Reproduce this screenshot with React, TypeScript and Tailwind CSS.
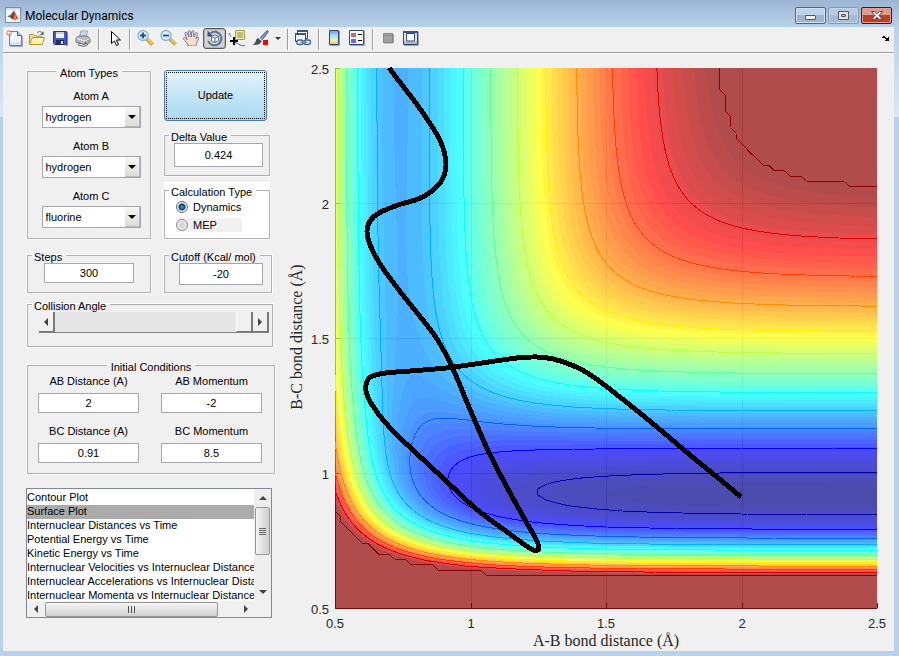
import { useMemo, useState } from 'react';
import type { ReactNode } from 'react';

// ---------- LEPS potential (kcal/mol, angstrom) ----------

type Pair = { d: number; beta: number; re: number };

const HH: Pair = { d: 109.5, beta: 1.942, re: 0.7419 };
const HF: Pair = { d: 141.2, beta: 2.2187, re: 0.917 };
const SATO = 0.424 * 0.424;

const R_MIN = 0.5;
const R_MAX = 2.5;
const PLOT_W = 542;
const PLOT_H = 540;
const V_MIN = -141.3;
const V_MAX = -20;
const V_CUT = -22.35;
const LEVEL_TOP = -22.1;
const LEVEL_STEP = 10.43;

const coulomb = (p: Pair, r: number) => {
  const e = Math.exp(-p.beta * (r - p.re));
  return (p.d / 4) * ((3 + SATO) * e * e - (2 + 6 * SATO) * e);
};

const exchange = (p: Pair, r: number) => {
  const e = Math.exp(-p.beta * (r - p.re));
  return (p.d / 4) * ((1 + 3 * SATO) * e * e - (6 + 2 * SATO) * e);
};

const potential = (ab: number, bc: number) => {
  const ac = ab + bc;
  const q = coulomb(HH, ab) + coulomb(HF, bc) + coulomb(HF, ac);
  const j1 = exchange(HH, ab);
  const j2 = exchange(HF, bc);
  const j3 = exchange(HF, ac);
  const root = Math.sqrt(0.5 * ((j1 - j2) ** 2 + (j2 - j3) ** 2 + (j3 - j1) ** 2));
  return Math.min((q - root) / (1 + SATO), V_CUT);
};

const clamp01 = (v: number) => Math.max(0, Math.min(1, v));

// 64 step jet colour map
const jet = (index: number) => {
  const x = (index + 1) / 64;
  const ch = (center: number) => Math.round(255 * clamp01(1.5 - Math.abs(4 * x - center)));
  return `rgb(${ch(3)},${ch(2)},${ch(1)})`;
};

const colorIndex = (v: number) =>
  Math.max(0, Math.min(63, Math.floor(((v - V_MIN) / (V_MAX - V_MIN)) * 64)));

// one path per colour, built from horizontal runs
const buildSurface = () => {
  const paths: string[] = Array(64).fill('');
  for (let y = 0; y < PLOT_H + 1; y++) {
    const bc = R_MAX - ((y + 0.5) / PLOT_H) * (R_MAX - R_MIN);
    let start = 0;
    let current = -1;
    for (let x = 0; x <= PLOT_W; x++) {
      const ab = R_MIN + ((x + 0.5) / PLOT_W) * (R_MAX - R_MIN);
      const idx = x === PLOT_W ? -2 : colorIndex(potential(ab, bc));
      if (idx !== current) {
        if (current >= 0) paths[current] += `M${start} ${y}h${x - start}v1h${start - x}z`;
        start = x;
        current = idx;
      }
    }
  }
  return paths;
};

// marching squares over a 0.02 angstrom grid
const GRID = 100;

const buildContours = () => {
  const v: number[][] = [];
  for (let i = 0; i <= GRID; i++) {
    v.push([]);
    for (let j = 0; j <= GRID; j++) {
      v[i].push(potential(R_MIN + i * 0.02, R_MIN + j * 0.02));
    }
  }
  const point = (i: number, j: number) => [(i / GRID) * PLOT_W, PLOT_H - (j / GRID) * PLOT_H];

  return Array.from({ length: 12 }, (_, k) => {
    const level = k === 0 ? V_CUT - 0.001 : LEVEL_TOP - k * LEVEL_STEP;
    let d = '';
    for (let i = 0; i < GRID; i++) {
      for (let j = 0; j < GRID; j++) {
        const corners = [[i, j], [i + 1, j], [i + 1, j + 1], [i, j + 1]];
        const hits: string[] = [];
        for (let c = 0; c < 4; c++) {
          const [ai, aj] = corners[c];
          const [bi, bj] = corners[(c + 1) % 4];
          const va = v[ai][aj];
          const vb = v[bi][bj];
          if (va < level !== vb < level) {
            const t = (level - va) / (vb - va);
            const [ax, ay] = point(ai, aj);
            const [bx, by] = point(bi, bj);
            hits.push(`${(ax + (bx - ax) * t).toFixed(1)} ${(ay + (by - ay) * t).toFixed(1)}`);
          }
        }
        for (let h = 0; h + 1 < hits.length; h += 2) d += `M${hits[h]}L${hits[h + 1]}`;
      }
    }
    return { d, color: jet(colorIndex(level)) };
  });
};

const TRAJECTORY = [
  [54, 0], [83, 38], [101, 65], [108, 80], [111, 97], [107, 112], [97, 123], [83, 131],
  [63, 137], [44, 145], [35, 153], [32, 164], [36, 179], [47, 199], [67, 226], [87, 251],
  [102.7, 272], [117.7, 300.3], [131, 332], [141.7, 357], [154.3, 385.3], [171.7, 418.7],
  [188.3, 448.7], [200, 469.3], [204, 479.5], [201, 482.5], [193.3, 479.3], [171.7, 463.7],
  [141.7, 441.3], [108.3, 410.3], [75, 379.3], [58.3, 363.3], [41.7, 343.7], [33, 329.3],
  [30.7, 318.7], [35, 309.3], [48.3, 305.3], [75, 303], [108.3, 300.3], [128.3, 297.7],
  [158.3, 293.3], [181.7, 290], [201.7, 289], [218.3, 291], [238.3, 297.7], [258.3, 308.7],
  [295, 337], [322, 359], [355, 387], [382, 409], [406, 429],
];

const smoothPath = (pts: number[][]) => {
  let d = `M${pts[0][0]} ${pts[0][1]}`;
  for (let i = 0; i < pts.length - 1; i++) {
    const p0 = pts[Math.max(i - 1, 0)];
    const p1 = pts[i];
    const p2 = pts[i + 1];
    const p3 = pts[Math.min(i + 2, pts.length - 1)];
    d += `C${p1[0] + (p2[0] - p0[0]) / 6} ${p1[1] + (p2[1] - p0[1]) / 6} ${p2[0] - (p3[0] - p1[0]) / 6} ${p2[1] - (p3[1] - p1[1]) / 6} ${p2[0]} ${p2[1]}`;
  }
  return d;
};

const TICKS = [0.5, 1, 1.5, 2, 2.5];

const SurfacePlot = () => {
  const surface = useMemo(buildSurface, []);
  const contours = useMemo(buildContours, []);
  const px = (r: number) => Math.round(((r - R_MIN) / 2) * PLOT_W);
  const py = (r: number) => Math.round(PLOT_H - ((r - R_MIN) / 2) * PLOT_H);

  return (
    <svg viewBox="0 0 609 597" className="block h-auto w-full" role="img" aria-label="Surface plot">
      <g transform="translate(50 14)">
        <rect width={PLOT_W} height={PLOT_H + 1} fill="#fff" />
        <g stroke="#262626" strokeWidth="1" shapeRendering="crispEdges">
          {TICKS.slice(1, 4).map(t => (
            <g key={t} strokeOpacity="0.2">
              <line x1={px(t) + 0.5} x2={px(t) + 0.5} y1="0" y2={PLOT_H} />
              <line y1={py(t) + 0.5} y2={py(t) + 0.5} x1="0" x2={PLOT_W} />
            </g>
          ))}
          {TICKS.map(t => (
            <g key={t}>
              <line x1={px(t) + 0.5} x2={px(t) + 0.5} y1={PLOT_H - 5} y2={PLOT_H} />
              <line y1={py(t) + 0.5} y2={py(t) + 0.5} x1="0" x2="5" />
            </g>
          ))}
          <line x1="0.5" x2="0.5" y1="0" y2={PLOT_H} />
          <line x1="0" x2={PLOT_W} y1={PLOT_H + 0.5} y2={PLOT_H + 0.5} />
        </g>
        <g fillOpacity="0.7" shapeRendering="crispEdges">
          {surface.map((d, i) => d && <path key={i} d={d} fill={jet(i)} />)}
        </g>
        <g fill="none" shapeRendering="crispEdges">
          {contours.map((c, i) => <path key={i} d={c.d} stroke={c.color} strokeWidth="1" />)}
        </g>
        <path
          d={smoothPath(TRAJECTORY)}
          fill="none"
          stroke="#000"
          strokeWidth="5"
          strokeLinejoin="round"
          shapeRendering="crispEdges"
        />
      </g>
      <g fill="#262626" className="font-['Liberation_Sans'] text-[13px]">
        {TICKS.map(t => (
          <g key={t}>
            <text x={50 + px(t)} y="574" textAnchor="middle">{t}</text>
            <text x="44" y={py(t) + 20} textAnchor="end">{t}</text>
          </g>
        ))}
      </g>
      <g fill="#262626" className="font-['Liberation_Serif'] text-[16px]">
        <text x="321" y="592" textAnchor="middle">A-B bond distance (Å)</text>
        <text transform="translate(17 283) rotate(-90)" textAnchor="middle">B-C bond distance (Å)</text>
      </g>
    </svg>
  );
};

// ---------- toolbar ----------

const Icon = ({ children }: { children: ReactNode }) => (
  <svg viewBox="0 0 19 19" className="h-[19px] w-[19px] shrink-0" fill="none" aria-hidden="true">{children}</svg>
);

const NewIcon = () => (
  <Icon>
    <path d="M4.500 2.500h8l4 4v10h-12z" fill="#eef5fd" stroke="#5d83b5" />
    <path d="M5 13h11v3H5z" fill="#d3e3f6" />
    <path d="M12.500 2.500v4h4" fill="#b9d2ef" stroke="#3b62a0" />
    <path d="M17.500 7v10.500H5" stroke="#9aa5b5" />
    <path d="M4 1v6M1 4h6M2 2l4 4M6 2 2 6" stroke="#e2703a" />
    <circle cx="4" cy="4" r="1.300" fill="#fff3d0" />
  </Icon>
);

const OpenIcon = () => (
  <Icon>
    <path d="M1.500 15.500V5.500h4l1.500 1.500h6.500V9" fill="#f5dd82" stroke="#b8942f" />
    <path d="m1.500 15.500 3-7h12l-2.500 7z" fill="#fdf0a8" stroke="#b8942f" />
    <path d="M5 10h10M4.500 12h10" stroke="#fffad6" />
    <path d="M9 4c1.500-2 4-2 5.500.5" stroke="#5b7186" />
    <path d="M15.800 2v4h-4z" fill="#5b7186" />
  </Icon>
);

const SaveIcon = () => (
  <Icon>
    <path d="M4 3.500h12.500v13H15" stroke="#8d8fa6" />
    <path d="M2.500 2.500h13v13h-12l-1-1z" fill="#4a59c4" stroke="#2c3691" />
    <path d="M5 3h8v6H5z" fill="#edf1fb" />
    <path d="M5 3h8v2H5z" fill="#c3cdee" />
    <path d="M5 11h8v5H5z" fill="#232c5c" />
    <path d="M10 12h2v3h-2z" fill="#dfe4f5" />
  </Icon>
);

const PrintIcon = () => (
  <Icon>
    <path d="m5.500 8 1.500-6h6.500L12 8z" fill="#e9f1fc" stroke="#8d9cb5" />
    <path d="M7.500 4h4.500M7 6h4.500" stroke="#a5b9d6" />
    <path d="m2 9 3-2h8l3 2.500v4L11 16l-9-3z" fill="#b9babd" stroke="#707275" />
    <path d="m2.500 9.500 9 2.500 4-2.500" stroke="#f2f2f2" />
    <path d="m5 14 5 1.500 2-1.500 2 1.500L10 17.500 4 16z" fill="#eee" stroke="#66686b" />
    <path d="M11.500 12.500v3" stroke="#5c5e61" />
    <path d="M13 11.500h2" stroke="#6dbb3d" />
  </Icon>
);

const PointerIcon = () => (
  <Icon>
    <path d="M6.500 2.500v12l3-2.500 2 4.500 2-1-2-4.500h4z" fill="#fff" stroke="#000" />
  </Icon>
);

const ZoomIcon = ({ plus }: { plus?: boolean }) => (
  <Icon>
    <path d="m11 10 5.500 5.500" stroke="#c58a2a" strokeWidth="3.600" />
    <path d="m11.500 10 5 5" stroke="#fbc263" strokeWidth="1.800" />
    <circle cx="7" cy="6.500" r="5" fill="#d8f0fb" stroke="#8db5d6" strokeWidth="1.400" />
    <path d={plus ? 'M4 6.500h6M7 3.500v6' : 'M4 6.500h6'} stroke="#1e4f8c" strokeWidth="1.800" />
  </Icon>
);

const HandIcon = () => (
  <Icon>
    <path
      d="M6 16.500c0-2-3-4.500-4.500-6.500-.6-1.300.9-2 2-.8l1.500 1.500L3 4.500c-.3-1.400 1.300-1.800 1.900-.6L7 8 6.200 2.700c0-1.400 1.700-1.500 2.100-.2L9.300 8l.6-5.600c.3-1.200 1.900-1 2 .3L11.800 8l1.900-3.900c.7-1 2-.5 1.800.7l-1.300 5 .7-1c.9-1.100 2.300-.5 1.800.8-1 2-2.200 4-2.700 6.900z"
      fill="#fbdfc5"
      stroke="#6b78a3"
    />
    <path d="M7 16.500h6.500" stroke="#d9a883" />
  </Icon>
);

const RotateIcon = () => (
  <Icon>
    <path d="M5.500 4a6.800 6.800 0 1 1-2.300 8" stroke="#566f98" strokeWidth="2" />
    <path d="M2.500 1.500v6h6z" fill="#3d5783" />
    <path d="m6.500 7.500 3.500-1.500 3.500 1.500v4l-3.500 2-3.500-1.500z" fill="#f5f8fd" stroke="#5a76a3" />
    <path d="m6.500 7.500 3.500 1.500 3.500-1.500M10 9v4.500" stroke="#5a76a3" />
  </Icon>
);

const DataCursorIcon = () => (
  <Icon>
    <path d="M1 4c1 1.500 1.500 2.500 2 4M7 13.500c2 .5 3 1 5 2.500 1.500 1 3 .8 4.500.5" stroke="#3c36e0" strokeDasharray="3 1" />
    <path d="M7.500 1.500h9v9h-9z" fill="#f3efa4" stroke="#a59c45" />
    <path d="M9 4h6M9 6h6M9 8h6" stroke="#8c8650" />
    <path d="M6 8v8M2 12h8" stroke="#000" strokeWidth="2" />
  </Icon>
);

const BrushIcon = () => (
  <Icon>
    <path d="m9 9 7-7.500 1.500 1L11 11z" fill="#7f9bdc" stroke="#3d539b" />
    <path d="M8 9c-2 0-3 1.500-3.200 3S3 15 1.500 15.500c3 1 8 .5 9.500-4z" fill="#4c4d52" />
    <path d="m8 9 3 2.500" stroke="#e6e6e6" strokeWidth="1.500" />
    <path d="M12 11h5v5h-5z" fill="#f00" />
  </Icon>
);

const LinkIcon = () => (
  <Icon>
    <path d="M3.500 1.500h10v8h-10z" fill="#fff" stroke="#2c457c" />
    <path d="M3 1h11v2H3z" fill="#2f539c" />
    <path d="M1.500 4.500h10v8h-10z" fill="#f3f7fd" stroke="#2c457c" />
    <path d="M1 4h11v2H1z" fill="#2f539c" />
    <rect x="2.800" y="11" width="6.500" height="4.500" rx="2.200" fill="#dcebf6" stroke="#45688c" strokeWidth="1.300" />
    <rect x="10" y="11" width="6.500" height="4.500" rx="2.200" fill="#dcebf6" stroke="#45688c" strokeWidth="1.300" />
    <path d="M6.500 13.200H13" stroke="#6f90af" strokeWidth="1.600" />
  </Icon>
);

const ColorbarIcon = () => (
  <Icon>
    <defs>
      <linearGradient id="bar" x1="0" y1="0" x2="0" y2="1">
        <stop offset="0" stopColor="#8f86ec" />
        <stop offset="0.35" stopColor="#93e6f5" />
        <stop offset="0.7" stopColor="#f4f0a0" />
        <stop offset="1" stopColor="#f5b09a" />
      </linearGradient>
    </defs>
    <path d="M5 16.500h9.500V2" stroke="#9a9ca3" />
    <path d="M4.500 1.500h9v14h-9z" fill="url(#bar)" stroke="#2c457c" />
  </Icon>
);

const LegendIcon = () => (
  <Icon>
    <path d="M2 16.500h14.500V2" stroke="#a4a6ad" />
    <path d="M1.500 1.500h14v14h-14z" fill="#f6f9fe" stroke="#2c457c" />
    <path d="M3 4h5v4H3z" fill="#e26264" />
    <path d="M3 10h5v4H3z" fill="#6b6be8" />
    <path d="M10 5.500h4M10 11.500h4" stroke="#000" />
  </Icon>
);

const HideIcon = () => (
  <Icon>
    <path d="M5 14h9.500V5" stroke="#a0a0a0" />
    <path d="M4.500 4.500h9v9h-9z" fill="#a3a3a3" stroke="#848484" />
    <path d="M5 6.500h8" stroke="#8c8c8c" />
  </Icon>
);

const DockIcon = () => (
  <Icon>
    <path d="M2 16.500h14.500V3" stroke="#a4a6ad" />
    <path d="M1.500 2.500h14v13h-14z" fill="#dfe3ec" stroke="#2c457c" />
    <path d="M1 2h15v2H1z" fill="#2f539c" />
    <path d="M2 12.500h13v2.500H2z" fill="#b7b9a8" />
    <path d="M4.500 4.500h8v7.500h-8z" fill="#fff" stroke="#2c457c" />
  </Icon>
);

const ToolButton = ({ label, active, children }: { label: string; active?: boolean; children: ReactNode }) => (
  <button
    type="button"
    aria-label={label}
    title={label}
    className={`flex h-[21px] w-[23px] items-center justify-center ${
      active ? 'rounded-[3px] border border-[#5a5a5a] bg-[#d3d3d3] shadow-[inset_0_0_0_1px_#b5b5b5]' : ''
    }`}
  >
    {children}
  </button>
);

const Separator = () => <div className="mx-[3px] mt-px h-[21px] w-[2px] border-l border-[#9c9c9c] bg-white" />;

const Toolbar = () => (
  <div className="flex h-[27px] items-start border-b border-white bg-[#f0f0f0] pt-px shadow-[inset_0_-1px_0_#a0a0a0]">
    <ToolButton label="New Figure"><NewIcon /></ToolButton>
    <ToolButton label="Open File"><OpenIcon /></ToolButton>
    <ToolButton label="Save Figure"><SaveIcon /></ToolButton>
    <ToolButton label="Print Figure"><PrintIcon /></ToolButton>
    <Separator />
    <ToolButton label="Edit Plot"><PointerIcon /></ToolButton>
    <Separator />
    <ToolButton label="Zoom In"><ZoomIcon plus /></ToolButton>
    <ToolButton label="Zoom Out"><ZoomIcon /></ToolButton>
    <ToolButton label="Pan"><HandIcon /></ToolButton>
    <ToolButton label="Rotate 3D" active><RotateIcon /></ToolButton>
    <ToolButton label="Data Cursor"><DataCursorIcon /></ToolButton>
    <ToolButton label="Brush"><BrushIcon /></ToolButton>
    <button type="button" aria-label="Brush colours" className="flex h-[21px] w-3 items-center justify-center">
      <svg viewBox="0 0 6 4" className="h-1 w-1.5" aria-hidden="true"><path d="M0 0h6L3 3z" fill="#333" /></svg>
    </button>
    <Separator />
    <ToolButton label="Link Plot"><LinkIcon /></ToolButton>
    <Separator />
    <ToolButton label="Insert Colorbar"><ColorbarIcon /></ToolButton>
    <ToolButton label="Insert Legend"><LegendIcon /></ToolButton>
    <Separator />
    <ToolButton label="Hide Plot Tools"><HideIcon /></ToolButton>
    <ToolButton label="Show Plot Tools"><DockIcon /></ToolButton>
    <button type="button" aria-label="Dock Figure" className="mr-1 ml-auto flex h-[22px] w-2 items-center">
      <svg viewBox="0 0 8 6" className="h-1.5 w-2" shapeRendering="crispEdges" aria-hidden="true">
        <path d="M0 1h1V0h2v1h1v1h2V1h1v4H3V4h1V3H3V2H0z" fill="#000" />
      </svg>
    </button>
  </div>
);

// ---------- title bar ----------

const TitleBar = () => (
  <header className="flex h-[27px] items-start bg-linear-to-b from-[#9bb5d2] to-[#b8d1eb]">
    <svg viewBox="0 0 16 16" className="mt-[7px] ml-[5px] h-4 w-4" aria-hidden="true">
      <path d="M.5.500h15v15H.5z" fill="#f6f7f9" stroke="#7b8ea5" />
      <path d="M1 1h14v2H1z" fill="#cfdcea" />
      <path d="m2 9.500 3.500-1.700L9 3.500 7 12l-1.500-1.500z" fill="#3d6fae" />
      <path d="M9 3.500c1.500 2 2.500 6 5 8.500-2-.8-3 0-4 1.500-1-.5-2-1.500-3.200-1.500C8 10 8.300 6 9 3.500z" fill="#d8552a" />
      <path d="M9 3.500c.4 3 .3 6-2.200 8.500L5.500 10.500C7 9 8 6.500 9 3.500z" fill="#7d2d23" />
      <path d="M9.300 5c.6 2.500.7 4.500.2 7.500l1.500-1z" fill="#f7a845" />
    </svg>
    <h1 className="mt-2 ml-1 font-['Roboto'] text-[12px] leading-4 text-black">Molecular Dynamics</h1>
    <div className="mt-[7px] mr-[7px] ml-auto flex gap-[2px]">
      <button type="button" aria-label="Minimize" className="flex h-[17px] w-[31px] items-center justify-center rounded-[2px] border border-[#56657c] bg-linear-to-b from-[#bfd2e7] from-50% to-[#9cb6d2] to-50% shadow-[inset_0_0_0_1px_#d3e1f0]">
        <span className="mt-1 h-[5px] w-[11px] rounded-[1px] border border-[#55585f] bg-[#f4f4ee]" />
      </button>
      <button type="button" aria-label="Maximize" className="flex h-[17px] w-[31px] items-center justify-center rounded-[2px] border border-[#8197b3] bg-linear-to-b from-[#b7cce3] from-50% to-[#a3bcd8] to-50% shadow-[inset_0_0_0_1px_#c1d3e7]">
        <svg viewBox="0 0 11 9" className="h-[9px] w-[11px]" aria-hidden="true">
          <path d="M.5.500h10v8H.5z" fill="#e4e4e0" stroke="#55585f" />
          <path d="M3.500 3.500h4v2h-4z" fill="#a3bcd8" stroke="#55585f" />
        </svg>
      </button>
      <button type="button" aria-label="Close" className="flex h-[17px] w-[31px] items-center justify-center rounded-[2px] border border-[#4a1220] bg-linear-to-b from-[#e09a8c] from-50% to-[#bb4026] to-50% shadow-[inset_0_0_0_1px_#e3a497]">
        <svg viewBox="0 0 12 9" className="h-[9px] w-3" aria-hidden="true">
          <path d="M.5.500h3.200L6 2.700 8.300.500h3.200L8 4.500l3.500 4H8.300L6 6.300 3.700 8.500H.5L4 4.500z" fill="#f4f4f4" stroke="#55475a" />
        </svg>
      </button>
    </div>
  </header>
);

// ---------- controls ----------

const Group = ({ title, id, className, center, children }: {
  title: string;
  id: string;
  className: string;
  center?: boolean;
  children: ReactNode;
}) => (
  <fieldset aria-labelledby={id} className={`border border-[#b0b0b0] shadow-[0_0_0_1px_#fbfbfb] ${className}`}>
    <legend id={id} className={`pt-1 leading-3 ${center ? 'mx-auto px-1' : 'ml-1 pr-1 pl-[2px]'}`}>{title}</legend>
    {children}
  </fieldset>
);

const INPUT = 'block border border-[#a5a7ad] bg-white text-center leading-4 outline-none';

const AtomSelect = ({ label, id, initial }: { label: string; id: string; initial: string }) => (
  <div className="flex flex-col items-center gap-[2px]">
    <label htmlFor={id} className="leading-4">{label}</label>
    <div className="relative w-[99px]">
      <select
        id={id}
        defaultValue={initial}
        className="block h-[22px] w-full appearance-none rounded-none border border-[#a5a7ad] bg-white pl-[3px] outline-none"
      >
        <option>hydrogen</option>
        <option>fluorine</option>
        <option>chlorine</option>
      </select>
      <span className="pointer-events-none absolute top-px right-px flex h-5 w-[15px] items-center justify-center border-r border-b border-[#b9b9b9] bg-linear-to-b from-[#f6f6f6] to-[#dcdcdc]">
        <svg viewBox="0 0 8 4" className="h-1 w-2" aria-hidden="true"><path d="M0 0h8L4 4z" fill="#000" /></svg>
      </span>
    </div>
  </div>
);

const Field = ({ label, id, initial }: { label: string; id: string; initial: string }) => (
  <div className="flex flex-col items-center gap-1">
    <label htmlFor={id} className="leading-4">{label}</label>
    <input id={id} defaultValue={initial} className={`${INPUT} h-5 w-full`} />
  </div>
);

const Arrow = ({ d }: { d: string }) => (
  <svg viewBox="0 0 8 8" className="h-2 w-2" aria-hidden="true"><path d={d} fill="#444" /></svg>
);

const UP = 'M0 6h8L4 2z';
const DOWN = 'M0 2h8L4 6z';
const LEFT = 'M6 0v8L2 4z';
const RIGHT = 'M2 0v8l4-4z';

const PLOTS = [
  'Contour Plot',
  'Surface Plot',
  'Internuclear Distances vs Time',
  'Potential Energy vs Time',
  'Kinetic Energy vs Time',
  'Internuclear Velocities vs Internuclear Distance',
  'Internuclear Accelerations vs Internuclear Distance',
  'Internuclear Momenta vs Internuclear Distance',
];

const RADIO = 'h-3 w-3 appearance-none rounded-full border border-[#8e8f8f] bg-[radial-gradient(#d0d0d0,#f4f4f4)] checked:border-[#5f6f7c] checked:bg-[radial-gradient(circle,#3ba3d8_0px,#0e3c66_3px,#e8eef2_4px)]';

const PlotList = () => (
  <div className="flex h-[130px] w-[246px] flex-col border border-[#828790] bg-[#f0f0f0]">
    <div className="flex h-[112px]">
      <select
        size={8}
        defaultValue="Surface Plot"
        aria-label="Plot type"
        className="min-w-0 flex-1 appearance-none overflow-hidden bg-white pt-[2px] outline-none [scrollbar-width:none]"
      >
        {PLOTS.map(p => (
          <option
            key={p}
            className="h-[14px] min-h-[14px] p-0 leading-[14px] text-black checked:bg-[linear-gradient(#ababab,#ababab)]"
          >
            {p}
          </option>
        ))}
      </select>
      <div className="flex w-[17px] flex-col items-center bg-[#eeeeee]">
        <button type="button" aria-label="Scroll up" className="flex h-[18px] w-full items-center justify-center"><Arrow d={UP} /></button>
        <div className="flex h-12 w-[15px] flex-col items-center justify-center gap-px rounded-[2px] border border-[#979797] bg-linear-to-r from-[#f5f5f5] to-[#cfcfcf]">
          <span className="h-px w-[7px] bg-[#666]" />
          <span className="h-px w-[7px] bg-[#666]" />
          <span className="h-px w-[7px] bg-[#666]" />
          <span className="h-px w-[7px] bg-[#666]" />
        </div>
        <button type="button" aria-label="Scroll down" className="mt-auto flex h-[18px] w-full items-center justify-center"><Arrow d={DOWN} /></button>
      </div>
    </div>
    <div className="flex h-4 items-center">
      <button type="button" aria-label="Scroll left" className="flex h-full w-[18px] items-center justify-center"><Arrow d={LEFT} /></button>
      <div className="flex h-[15px] w-[173px] items-center justify-center gap-[2px] rounded-[2px] border border-[#979797] bg-linear-to-b from-[#f5f5f5] to-[#cfcfcf]">
        <span className="h-[7px] w-px bg-[#555]" />
        <span className="h-[7px] w-px bg-[#555]" />
        <span className="h-[7px] w-px bg-[#555]" />
      </div>
      <button type="button" aria-label="Scroll right" className="mr-4 ml-auto flex h-full w-[18px] items-center justify-center"><Arrow d={RIGHT} /></button>
    </div>
  </div>
);

const Controls = () => {
  const [mode, setMode] = useState('dynamics');
  const [angle, setAngle] = useState(180);

  return (
    <aside className="w-[282px] shrink-0 pt-[9px] pl-6">
      <div className="flex gap-[13px]">
        <Group title="Atom Types" id="atom-types" center className="h-[176px] w-[124px]">
          <div className="flex flex-col gap-[10px] pt-[9px] pl-1">
            <AtomSelect label="Atom A" id="atom-a" initial="hydrogen" />
            <AtomSelect label="Atom B" id="atom-b" initial="hydrogen" />
            <AtomSelect label="Atom C" id="atom-c" initial="fluorine" />
          </div>
        </Group>

        <div className="flex w-[106px] flex-col gap-1.5 pt-[7px]">
          <button
            type="button"
            className="h-[51px] w-[103px] rounded-[3px] border border-[#3c7fb1] bg-linear-to-b from-[#e6f4fc] from-0% via-[#c4e5f6] via-50% to-[#a9daf3] p-px"
          >
            <span className="flex h-full items-center justify-center border border-dotted border-black">Update</span>
          </button>
          <Group title="Delta Value" id="delta" className="h-[49px]">
            <input aria-labelledby="delta" defaultValue="0.424" className={`${INPUT} ml-[9px] h-6 w-[89px]`} />
          </Group>
          <div className="bg-white">
            <Group title="Calculation Type" id="calc" className="h-[57px]">
              <label className="ml-[11px] flex h-[18px] items-center gap-[5px]">
                <input type="radio" name="calc" className={RADIO} checked={mode === 'dynamics'} onChange={() => setMode('dynamics')} />
                Dynamics
              </label>
              <label className="my-[2px] ml-[11px] flex h-[14px] w-[66px] items-center gap-[5px] bg-[#f0f0f0]">
                <input type="radio" name="calc" className={RADIO} checked={mode === 'mep'} onChange={() => setMode('mep')} />
                MEP
              </label>
            </Group>
          </div>
        </div>
      </div>

      <div className="mt-2 flex gap-[13px]">
        <Group title="Steps" id="steps" className="h-[46px] w-[124px]">
          <input aria-labelledby="steps" defaultValue="300" className={`${INPUT} ml-4 h-5 w-[90px]`} />
        </Group>
        <Group title="Cutoff (Kcal/ mol)" id="cutoff" className="h-[46px] w-[108px]">
          <input aria-labelledby="cutoff" defaultValue="-20" className={`${INPUT} ml-[14px] h-[22px] w-[84px]`} />
        </Group>
      </div>

      <Group title="Collision Angle" id="angle" className="mt-[3px] h-[51px] w-[246px]">
        <div className="ml-[11px] flex h-[21px] w-[230px] border-b border-[#808080]">
          <button type="button" aria-label="Decrease angle" onClick={() => setAngle(angle - 1)} className="flex w-4 items-center justify-center border-r-2 border-b border-[#7a7a7a] bg-[#f0f0f0]">
            <Arrow d={LEFT} />
          </button>
          <input
            type="range"
            aria-labelledby="angle"
            min={0}
            max={180}
            value={angle}
            onChange={e => setAngle(Number(e.target.value))}
            className="h-5 min-w-0 flex-1 appearance-none bg-[#e5e5e5] [&::-webkit-slider-thumb]:h-5 [&::-webkit-slider-thumb]:w-[17px] [&::-webkit-slider-thumb]:appearance-none [&::-webkit-slider-thumb]:border-r-2 [&::-webkit-slider-thumb]:border-b [&::-webkit-slider-thumb]:border-l [&::-webkit-slider-thumb]:border-[#7a7a7a] [&::-webkit-slider-thumb]:border-l-white [&::-webkit-slider-thumb]:bg-[#f0f0f0]"
          />
          <button type="button" aria-label="Increase angle" onClick={() => setAngle(angle + 1)} className="flex w-4 items-center justify-center border-r-2 border-b border-[#7a7a7a] bg-[#f0f0f0]">
            <Arrow d={RIGHT} />
          </button>
        </div>
      </Group>

      <Group title="Initial Conditions" id="initial" center className="mt-[10px] h-[117px] w-[248px]">
        <div className="grid grid-cols-[101px_101px] gap-x-[22px] gap-y-[10px] pl-[10px]">
          <Field label="AB Distance (A)" id="ab-distance" initial="2" />
          <Field label="AB Momentum" id="ab-momentum" initial="-2" />
          <Field label="BC Distance (A)" id="bc-distance" initial="0.91" />
          <Field label="BC Momentum" id="bc-momentum" initial="8.5" />
        </div>
      </Group>

      <div className="mt-[14px] -ml-px">
        <PlotList />
      </div>
    </aside>
  );
};

const App = () => (
  <div className="min-h-screen bg-[#b9d1ea] bg-[linear-gradient(#b8d1eb_27px,#dbe7f5_117px,transparent_117px)] pb-[5px] font-['Liberation_Sans',sans-serif] text-[11px] text-black">
    <TitleBar />
    <div className="mr-[5px] ml-[3px] bg-[#f0f0f0]">
      <Toolbar />
      <main className="flex">
        <Controls />
        <div className="min-w-0 flex-1">
          <SurfacePlot />
        </div>
      </main>
    </div>
  </div>
);

export default App;
